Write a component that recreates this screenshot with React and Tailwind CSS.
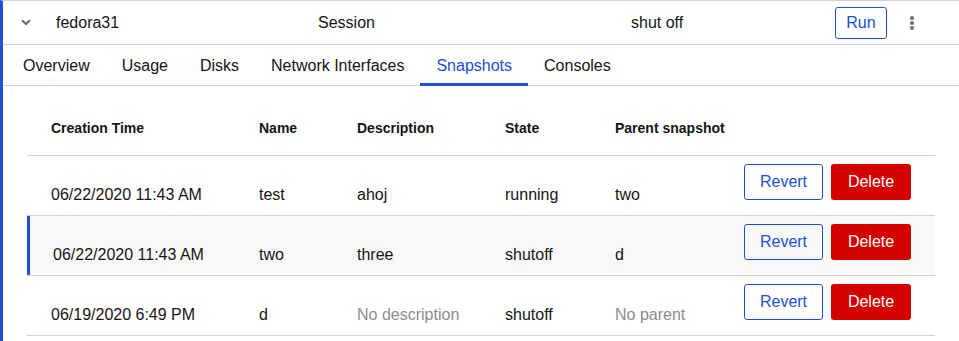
import React from "react";

const rows = [
  { time: "06/22/2020 11:43 AM", name: "test", desc: "ahoj", state: "running", parent: "two" },
  { time: "06/22/2020 11:43 AM", name: "two", desc: "three", state: "shutoff", parent: "d", selected: true },
  { time: "06/19/2020 6:49 PM", name: "d", desc: null, state: "shutoff", parent: null },
];

const tabs = ["Overview", "Usage", "Disks", "Network Interfaces", "Snapshots", "Consoles"];

const cols = "grid grid-cols-[232px_98px_148px_110px_129px_1fr]";

export default function App() {
  return (
    <div className="min-h-screen bg-white font-['Liberation_Sans',Arial,sans-serif] text-[#151515]">
      <div className="min-h-screen border-l-[3px] border-t border-l-[#2150d6] border-t-[#d2d2d2]">
        {/* vm row */}
        <div className="flex h-[44px] items-center border-b border-[#d2d2d2] pr-[22px] text-base">
          <div className="flex w-[53px] pl-[18px]">
            <svg width="10" height="7" viewBox="0 0 10 7" aria-hidden="true">
              <path d="M1 1.2 L5 5 L9 1.2" fill="none" stroke="#6a6e73" strokeWidth="2" />
            </svg>
          </div>
          <div className="w-[262px]">fedora31</div>
          <div className="w-[313px]">Session</div>
          <div className="flex-1">shut off</div>
          <button className="h-[32px] w-[52px] rounded-[3px] border border-[#2150d6] text-[#2150d6]">Run</button>
          <div className="flex w-[50px] justify-center">
            <svg width="4" height="14" viewBox="0 0 4 14" aria-hidden="true">
              <circle cx="2" cy="2" r="2" fill="#6a6e73" />
              <circle cx="2" cy="7" r="2" fill="#6a6e73" />
              <circle cx="2" cy="12" r="2" fill="#6a6e73" />
            </svg>
          </div>
        </div>

        {/* tabs */}
        <div className="relative flex h-[41px] border-b border-[#d2d2d2] pl-[4px] pt-px text-base">
          {tabs.map((t) => (
            <div
              key={t}
              className={
                "relative flex items-center px-4 " + (t === "Snapshots" ? "text-[#2150d6]" : "")
              }
            >
              {t}
              {t === "Snapshots" && (
                <span className="absolute -bottom-[1px] left-0 right-0 h-[3px] bg-[#2150d6]" />
              )}
            </div>
          ))}
        </div>

        {/* snapshots table */}
        <div className="px-6">
          <div className={cols + " border-b border-[#d2d2d2] pt-[32px] pb-[17px] text-sm font-bold leading-5"}>
            <div className="pl-6">Creation Time</div>
            <div>Name</div>
            <div>Description</div>
            <div>State</div>
            <div>Parent snapshot</div>
            <div />
          </div>
          {rows.map((r, i) => (
            <div
              key={i}
              className={
                cols + " h-[60px] border-b border-[#d2d2d2] text-base leading-6 " + (r.selected ? "bg-[#f9f9f9]" : "")
              }
            >
              <div
                className={
                  "pt-[27px] " + (r.selected ? "border-l-[3px] border-[#2150d6] pl-[23px]" : "pl-6")
                }
              >
                {r.time}
              </div>
              <div className="pt-[27px]">{r.name}</div>
              <div className={"pt-[27px] " + (r.desc ? "" : "text-[#8a8d90]")}>
                {r.desc || "No description"}
              </div>
              <div className="pt-[27px]">{r.state}</div>
              <div className={"pt-[27px] " + (r.parent ? "" : "text-[#8a8d90]")}>
                {r.parent || "No parent"}
              </div>
              <div className="flex justify-end gap-2 pr-6 pt-2">
                <button className="h-[36px] w-[79px] rounded-[3px] border border-[#2150d6] text-[#2150d6]">
                  Revert
                </button>
                <button className="h-[36px] w-[80px] rounded-[3px] bg-[#d40000] text-white">Delete</button>
              </div>
            </div>
          ))}
        </div>
      </div>
    </div>
  );
}
